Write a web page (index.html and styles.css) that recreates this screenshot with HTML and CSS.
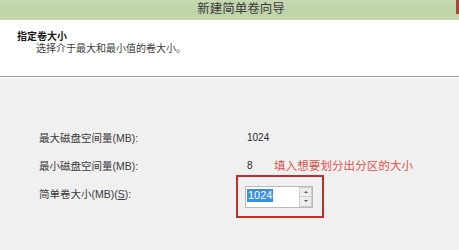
FILE: index.html
```html
<!DOCTYPE html>
<html lang="zh-CN">
<head>
<meta charset="utf-8">
<title>新建简单卷向导</title>
<link rel="stylesheet" href="styles.css">
</head>
<body>
<div class="window">
  <div class="titlebar">
    <div class="title">新建简单卷向导</div>
    <div class="close-edge"></div>
  </div>
  <div class="header">
    <div class="h-title">指定卷大小</div>
    <div class="h-sub">选择介于最大和最小值的卷大小。</div>
  </div>
  <div class="content">
    <div class="row">
      <div class="label">最大磁盘空间量(MB):</div>
      <div class="value">1024</div>
    </div>
    <div class="row">
      <div class="label">最小磁盘空间量(MB):</div>
      <div class="value">8</div>
      <div class="note">填入想要划分出分区的大小</div>
    </div>
    <div class="row">
      <div class="label">简单卷大小(MB)(<u>S</u>):</div>
      <div class="value">
        <div class="mark">
          <div class="spin">
            <div class="spin-text"><span class="sel">1024</span></div>
            <div class="spin-btns">
              <div class="sbtn"><span class="up"></span></div>
              <div class="sbtn"><span class="down"></span></div>
            </div>
          </div>
        </div>
      </div>
    </div>
  </div>
</div>
</body>
</html>
```

FILE: styles.css
```css
html, body {
  margin: 0;
  padding: 0;
}
body {
  width: 459px;
  height: 250px;
  overflow: hidden;
  background: #f0f0f0;
  font-family: "Liberation Sans", "Noto Sans CJK SC", sans-serif;
  color: #333;
}
.window {
  display: flex;
  flex-direction: column;
  height: 250px;
}
.titlebar {
  height: 20px;
  display: flex;
  align-items: flex-start;
  background: linear-gradient(180deg, #c6d8b2 0%, #bfd3a8 60%, #c4d7ae 100%);
}
.title {
  flex: 1;
  text-align: center;
  padding-left: 26px;
  font-size: 12.5px;
  line-height: 19px;
  color: #3a3a3a;
}
.close-edge {
  width: 3px;
  height: 14px;
  background: #a8473c;
}
.header {
  height: 57px;
  background: #fff;
  border-bottom: 1px solid #a6a6a6;
  box-shadow: 0 1px 0 #ffffff;
  padding: 10px 0 0 17px;
  box-sizing: border-box;
}
.h-title {
  font-size: 10px;
  font-weight: bold;
  line-height: 13px;
  color: #1a1a1a;
}
.h-sub {
  font-size: 10px;
  line-height: 12px;
  padding-left: 19px;
  color: #3c3c3c;
}
.content {
  padding: 46px 0 0 39px;
}
.row {
  height: 28px;
  display: flex;
  align-items: center;
  font-size: 10.5px;
}
.label {
  width: 208px;
  color: #3a3a3a;
}
.value {
  font-size: 10px;
  color: #2a2a2a;
  width: 27px;
}
.note {
  font-size: 11.5px;
  letter-spacing: 0.1px;
  color: #e0504b;
}
.mark {
  border: 2px solid #c0302b;
  padding: 9px 9px 8px 7px;
  margin: 4px 0 0 -11px;
  width: max-content;
  position: relative;
  top: 1px;
}
.spin {
  display: flex;
  width: 68px;
  height: 22px;
  box-sizing: border-box;
  border: 1px solid #b5b9c0;
  background: #fff;
}
.spin-text {
  flex: 1;
  padding: 2px 0 0 1px;
}
.sel {
  display: inline-block;
  background: #3b8fe0;
  color: #fff;
  font-size: 11px;
  line-height: 13px;
  padding: 0 1px;
}
.spin-btns {
  width: 13px;
  display: flex;
  flex-direction: column;
}
.sbtn {
  flex: 1;
  border: 1px solid #cdcdcd;
  background: #ececec;
  display: flex;
  align-items: center;
  justify-content: center;
}
.sbtn + .sbtn {
  border-top: none;
}
.up {
  width: 0;
  height: 0;
  border-left: 2px solid transparent;
  border-right: 2px solid transparent;
  border-bottom: 2px solid #555;
}
.down {
  width: 0;
  height: 0;
  border-left: 2px solid transparent;
  border-right: 2px solid transparent;
  border-top: 2px solid #555;
}
```
